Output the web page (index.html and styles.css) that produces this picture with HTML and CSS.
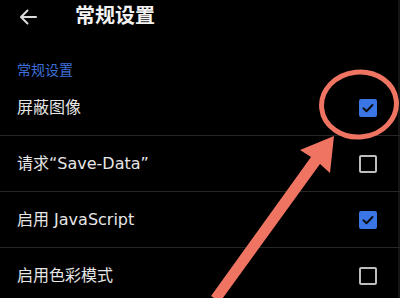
FILE: index.html
```html
<!DOCTYPE html>
<html lang="zh">
<head>
<meta charset="utf-8">
<link rel="stylesheet" href="styles.css">
</head>
<body>
<div class="screen">
  <header class="topbar">
    <svg class="back" width="18" height="16" viewBox="0 0 18 16">
      <path d="M17 8H2M8.5 1.5L2 8l6.5 6.5" fill="none" stroke="#dcdcdc" stroke-width="2" stroke-linecap="round" stroke-linejoin="round"/>
    </svg>
    <h1 class="title">常规设置</h1>
  </header>
  <div class="section">常规设置</div>
  <ul class="list">
    <li class="row"><span class="label">屏蔽图像</span><span class="box on"><svg width="18" height="18" viewBox="0 0 18 18"><path d="M4.5 9.2l3 3 6-6.2" fill="none" stroke="#0d0d0d" stroke-width="2" stroke-linecap="round" stroke-linejoin="round"/></svg></span></li>
    <li class="row"><span class="label">请求“Save-Data”</span><span class="box"></span></li>
    <li class="row"><span class="label">启用 JavaScript</span><span class="box on"><svg width="18" height="18" viewBox="0 0 18 18"><path d="M4.5 9.2l3 3 6-6.2" fill="none" stroke="#0d0d0d" stroke-width="2" stroke-linecap="round" stroke-linejoin="round"/></svg></span></li>
    <li class="row"><span class="label">启用色彩模式</span><span class="box"></span></li>
  </ul>
  <svg class="overlay" width="400" height="298" viewBox="0 0 400 298">
    <ellipse cx="359" cy="104.5" rx="37.5" ry="32.5" transform="rotate(-6 359 104.5)" fill="none" stroke="#ef7462" stroke-width="5"/>
    <path d="M334 136 L330 173 L320 164 L220 302 L211 296 L311 157 L300 150 Z" fill="#ef7462"/>
  </svg>
</div>
</body>
</html>
```
FILE: styles.css
```css
html, body {
  margin: 0;
  padding: 0;
  background: #000;
}
.screen {
  position: relative;
  width: 400px;
  height: 298px;
  overflow: hidden;
  background: #000;
  font-family: "Noto Sans", "Noto Sans CJK SC", sans-serif;
  color: #e8e8e8;
  box-shadow: inset -2px 0 0 #151515;
}
.topbar {
  height: 32px;
  display: flex;
  align-items: center;
  padding-left: 19px;
}
.back {
  display: block;
  margin-top: 1px;
}
.title {
  margin: 0 0 0 38px;
  font-size: 20px;
  font-weight: 700;
  line-height: 32px;
  color: #f2f2f2;
}
.section {
  margin-top: 28px;
  height: 20px;
  padding-left: 17px;
  font-size: 14px;
  line-height: 20px;
  color: #3d6fd9;
}
.list {
  list-style: none;
  margin: 0;
  padding: 0;
}
.row {
  height: 55px;
  border-bottom: 1px solid #262626;
  display: flex;
  align-items: center;
  justify-content: space-between;
  padding: 0 23px 0 17px;
}
.label {
  font-family: "DejaVu Sans", "Noto Sans CJK SC", sans-serif;
  font-size: 16px;
  line-height: 20px;
  color: #e6e6e6;
}
.box {
  width: 18px;
  height: 18px;
  box-sizing: border-box;
  border: 2px solid #bdbdbd;
  border-radius: 2px;
  display: flex;
  align-items: center;
  justify-content: center;
}
.box.on {
  border: none;
  background: #3b76e6;
}
.box svg {
  display: block;
}
.overlay {
  position: absolute;
  left: 0;
  top: 0;
}
```
